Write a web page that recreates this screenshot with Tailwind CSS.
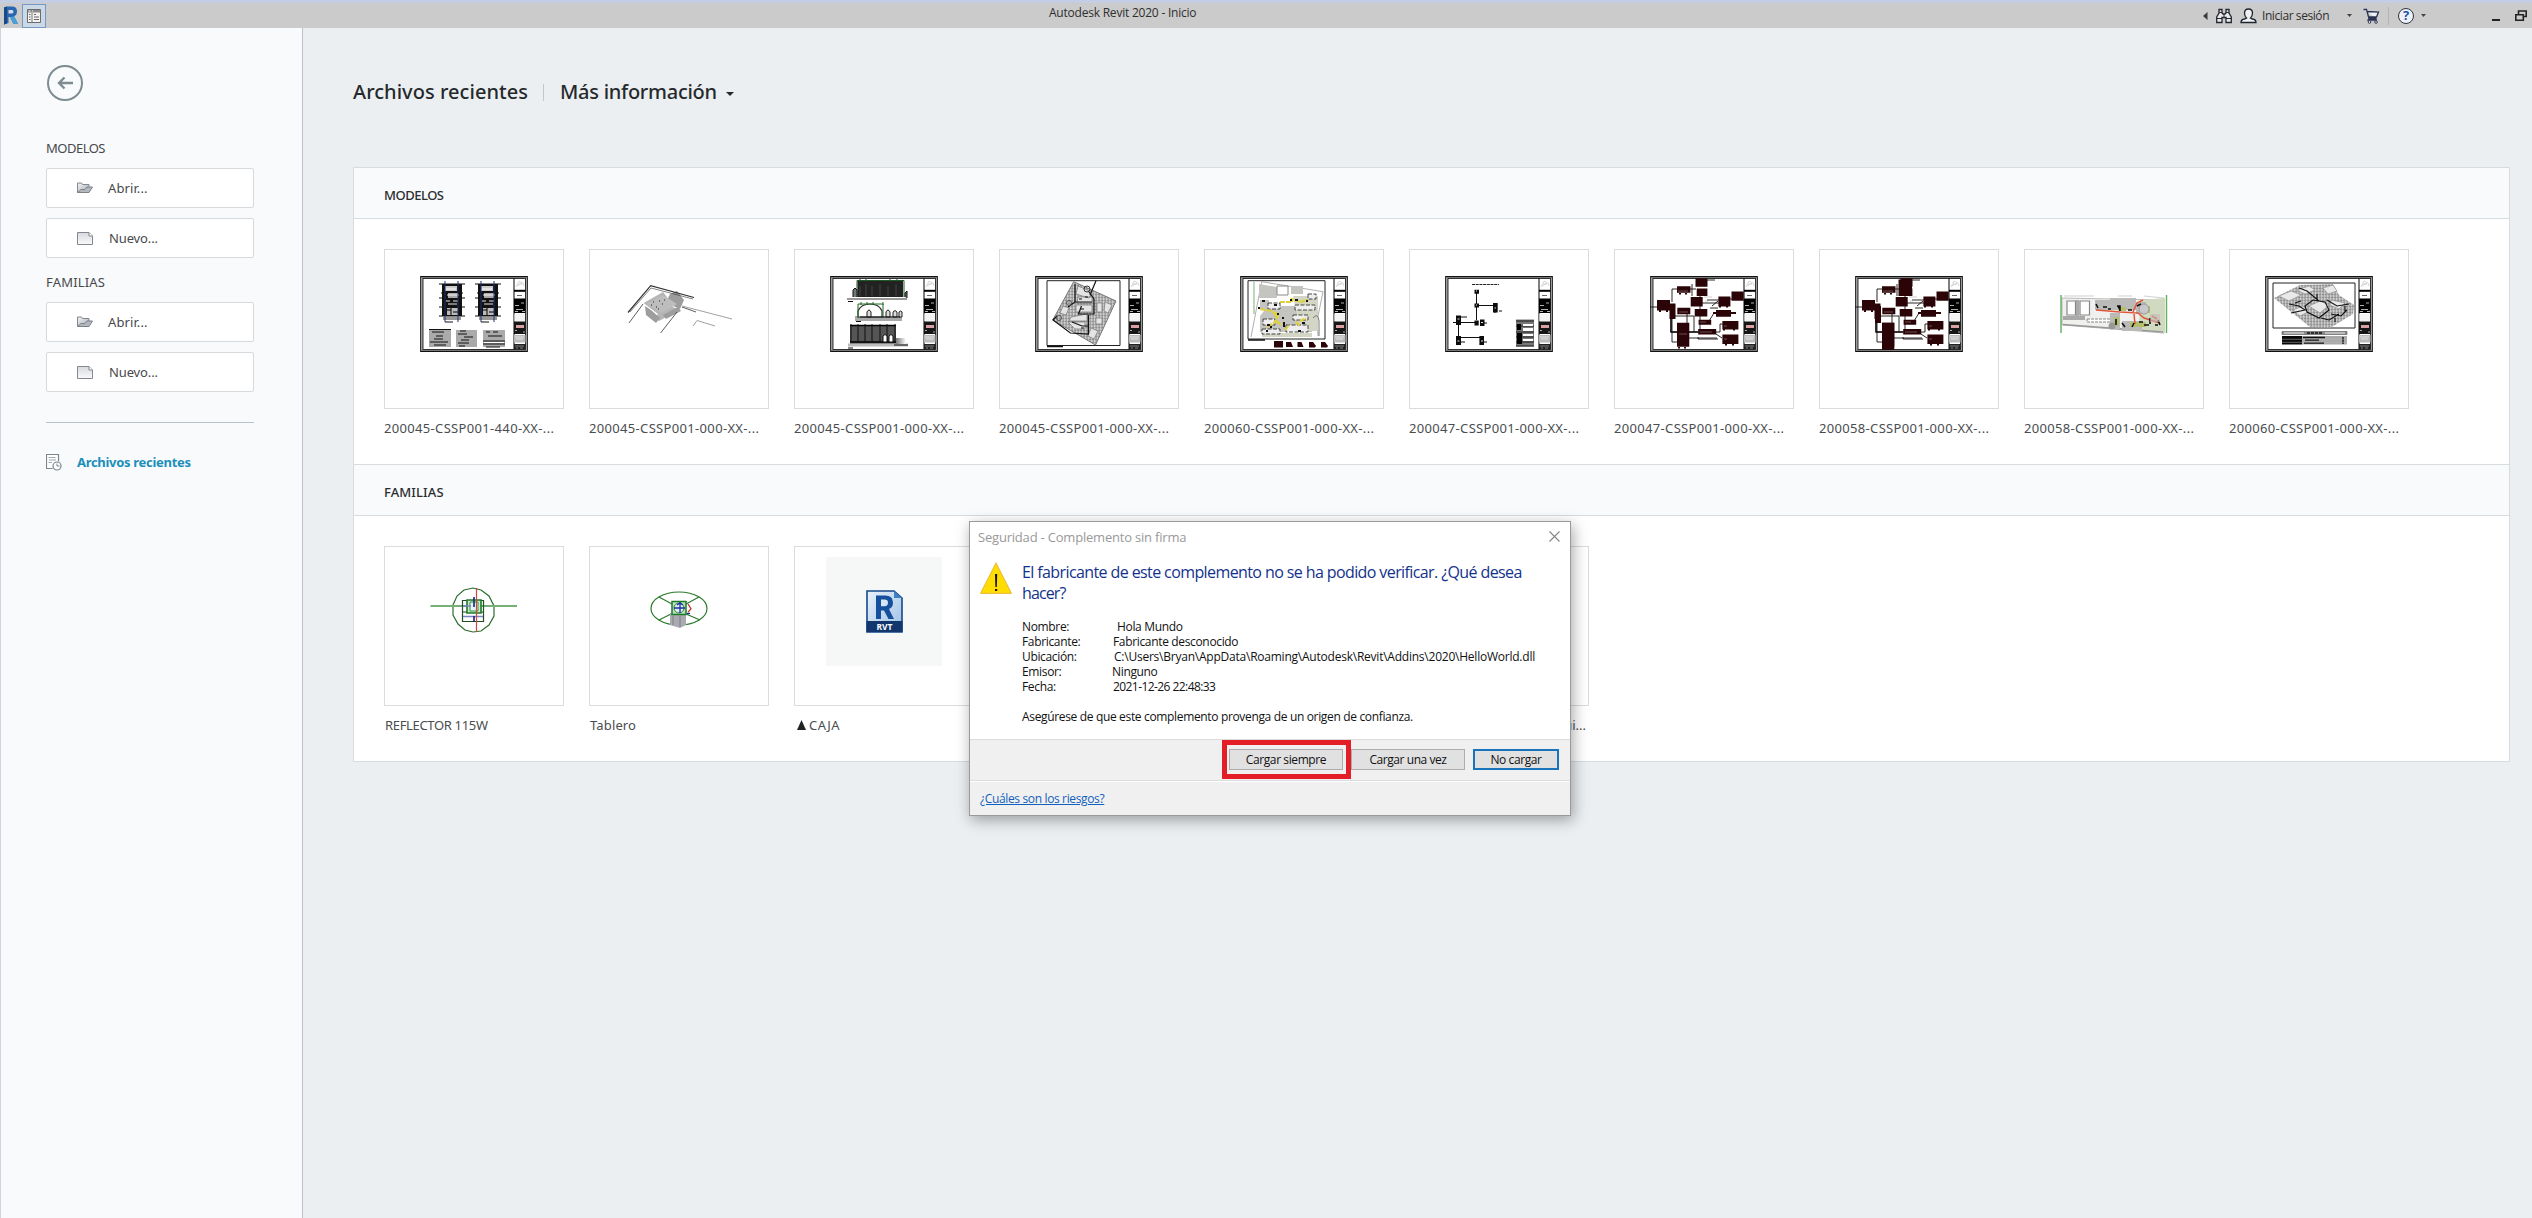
<!DOCTYPE html>
<html lang="es">
<head>
<meta charset="utf-8">
<title>Autodesk Revit 2020 - Inicio</title>
<script src="https://cdn.jsdelivr.net/npm/@tailwindcss/browser@4"></script>
</head>
<body class="relative flex h-[1218px] w-[2532px] flex-col overflow-hidden bg-[#ebeff2] font-['Noto_Sans',sans-serif] text-[13px] leading-5 text-[#4a4d50]">

<!-- Shared drawings -->
<svg width="0" height="0" class="absolute">
  <defs>
    <linearGradient id="gFold" x1="0" y1="0" x2="1" y2="1"><stop offset="0" stop-color="#f4f5f7"/><stop offset="1" stop-color="#a4a9b1"/></linearGradient>
    <linearGradient id="gPage" x1="0" y1="0" x2="0" y2="1"><stop offset="0" stop-color="#d6d9de"/><stop offset="1" stop-color="#fafafa"/></linearGradient>
    <linearGradient id="gFade" x1="0" y1="0" x2="1" y2="0"><stop offset="0" stop-color="#777"/><stop offset="1" stop-color="#fff"/></linearGradient>
    <linearGradient id="gRvt" x1="0" y1="0" x2="1" y2="1"><stop offset="0" stop-color="#e9f2fb"/><stop offset="1" stop-color="#9dbfe4"/></linearGradient>
    <pattern id="hatch" width="3" height="3" patternUnits="userSpaceOnUse"><rect width="3" height="3" fill="#b4b4b4"/><path d="M0 .5h2M1 2h1" stroke="#8a8a8a" stroke-width=".8"/><path d="M2.5 1.5v1" stroke="#e6e6e6"/></pattern>
    <symbol id="open" viewBox="0 0 16 12"><path d="M.5 10.500v-9.500h4l1 1.500h6.500v2.500" fill="url(#gFold)" stroke="#83888f"/><path d="M.5 10.500L4 7.500h4l2-2.500h5.500l-3.500 5.500z" fill="#b3b8bf" stroke="#7d8289"/></symbol>
    <symbol id="new" viewBox="0 0 16 13"><path d="M.5 .5H12l3.500 3.500v8.500H.5z" fill="url(#gPage)" stroke="#83888f"/><path d="M12 .5v3.500h3.500" fill="#fff" stroke="#83888f"/></symbol>
    <symbol id="sheet" viewBox="0 0 108 76">
      <rect width="108" height="76" fill="#9b9b9b"/><path d="M0 .6h108M0 75.400h108" stroke="#111" stroke-width="1.200"/><path d="M.5 0v76M107.500 0v76" stroke="#333"/>
      <rect x="3" y="2.500" width="102.500" height="71" fill="#fff" stroke="#222" stroke-width=".9"/>
      <path d="M94 2.500v71" stroke="#000" stroke-width="1"/>
      <path d="M96 11l3-6 4 2 1 3M98 8h4M97 10l5-3" stroke="#ccc" stroke-width=".8" fill="none"/>
      <path d="M94 14.800h11.500" stroke="#000" stroke-width="2"/><path d="M97 19.500h5" stroke="#444" stroke-width=".8"/>
      <rect x="94" y="22.500" width="11.500" height="14.500" fill="#000"/><path d="M95 29.500h4M101 27h3M96 33.500h7M95 35.500h3M102 35.500h3" stroke="#ddd" stroke-width=".8"/><rect x="94.500" y="38" width="10.500" height="7" fill="#f3f3f3"/>
      <rect x="94" y="45.500" width="11.500" height="12.500" fill="#161616"/><rect x="96" y="49" width="8" height="3" fill="#dba0a4"/><path d="M95 54.500h2M103 56h2" stroke="#aaa"/>
      <rect x="94" y="59" width="11.500" height="7.500" fill="#bbb"/><path d="M95 61h9M96 63h7" stroke="#eee" stroke-width=".8"/>
      <rect x="94" y="68" width="11.500" height="5.500" fill="#222"/><path d="M95 70h9M96 72h2M100 72h3" stroke="#999" stroke-width=".8"/>
    </symbol>
    <symbol id="plan" viewBox="0 0 26 42">
      <path d="M0 3h26M2 12h22M0 17h26M0 26h26M0 35h26" stroke="#111" stroke-width="1.200"/>
      <rect x="3" y="3" width="20" height="32" fill="#111"/><rect x="6" y="5" width="12" height="5" fill="#ccc"/><rect x="9" y="12" width="10" height="5" fill="#aaa"/><path d="M7 8h10M8 14h12M7 20h4M14 20h5M9 23h9" stroke="#fff" stroke-width=".9"/><rect x="8" y="27" width="11" height="7" fill="#bbb"/><path d="M8 29h4M14 31h5M12 27v7" stroke="#000"/>
      <path d="M4 36h18v3H4z" fill="#999"/><path d="M6 0v41M19 0v41" stroke="#20306e" stroke-width="1"/><path d="M6 41h8" stroke="#111"/>
    </symbol>
    <symbol id="net" viewBox="0 0 108 76">
      <g fill="none" stroke="#161010" stroke-width=".9"><path d="M0 31h8M27 13h-5v13M40 13h6M42 8v12M56 4h9M22 28v38h7M21 28v28h28M24 40h20v16M37 38v24h30M51 27h18M57 24h12M64 37l-5 8M66 56h4v-8h4M66 58l6 4M62 30l6-5M74 23h9M50 18v40M48 61v2h20M60 32h8" stroke="#161010"/><path d="M21 30v26h27" stroke-width="1.500"/></g>
      <g fill="#2b0407"><path d="M7 24h13v10.500H7zM27 10.300h13.500v6.500H27zM45.500 2.300h12v8.500h-12zM46.700 12.500h10.700v7.400H46.700zM40.700 21h12v9.500h-12zM44.700 33h12.600v7.500H44.700zM27.300 31.800h13v6.500h-13zM19.500 27.400h6V43h-6zM68.400 20.400h12v10h-12zM81.500 15.400h12.200v9.300H81.500zM66 34h15v6.700H66zM63 36h23v2H63zM48.600 43.700h12.600v5H48.600zM27 46.700h12.300v24H27zM48.200 53h18v5.400h-18zM72.400 45h16v8.400h-16zM72.400 58.500h16V68h-16z"/><path d="M10 34v2M17 34v2M30 17v1.500M36 17v1.500M29 71v1.500M35 71v1.500M74 53v1.500M84 53v1.500M76 68v1.500M83 68v1.500M70 30v1.500M77 30v1.500" stroke="#2b0407" stroke-width="2"/></g>
      <path d="M28 15h10M29 36h9M50 56h12M50 46h6M29 58h8M54 21h8M55 25h3M74 50h3M74 63h3" stroke="#a99" stroke-width=".5"/>
    </symbol>
  </defs>
</svg>

<!-- Title bar -->
<header class="flex h-7 shrink-0 items-center justify-between border-t-[3px] border-[#c3cde3] bg-[#cbcbcb] font-['Open_Sans',sans-serif] text-[12px] text-[#2e2e2e]">
  <div class="flex w-[1049px] items-center pl-[3px]">
    <svg width="16" height="19" viewBox="0 0 16 19"><path d="M1 1.500L4 .5H9q5 0 5 5 0 3.500-3 4.800L15 18h-4.500L7 11H5.500v6L1 18.500z" fill="#2a66b0"/><path d="M5.500 4H9q1.500 0 1.500 1.700T9 7.500H5.500z" fill="#d4dbe4"/><path d="M1 1.500l3-1v17l-3 1z" fill="#184a86"/><path d="M7 11l3.500 7H15l-3.500-7.500z" fill="#4aa0d0"/></svg>
    <div class="ml-[3px] flex h-6 w-6 items-center justify-center border border-[#7798c6] bg-[#cbd8e6]">
      <svg width="14" height="14" viewBox="0 0 14 14"><path d="M.5 .5h13v13H.5z" fill="#f2f2ee" stroke="#6b6b6b"/><path d="M1 1h12v2.500H1z" fill="#8b8b8b"/><path d="M1.500 2h2M5 2h1" stroke="#eee"/><path d="M5 3.500V13" stroke="#777"/><path d="M2 5.500h1.500M2 8h1.500M2 10.500h1.500M7 5.500h2M7 8h5M7 10.500h5" stroke="#666"/></svg>
    </div>
  </div>
  <div class="-mt-1.5 flex-1 text-[12px] tracking-[-0.22px]">Autodesk Revit 2020 - Inicio</div>
  <div class="flex items-center pr-[5px]">
    <svg width="5" height="8" viewBox="0 0 5 8"><path d="M4.500 0v8L0 4z" fill="#3a3a3a"/></svg>
    <svg class="ml-2" width="16" height="16" viewBox="0 0 16 16"><path d="M.7 14.500V9L3 5V1.500h3V5l1 1h2l1-1V1.500h3V5l2.300 4v5.500H10V9.500H6v5z" fill="#e9e9ee" stroke="#23262e" stroke-width="1.300"/><path d="M3 4.500h3M10 4.500h3M1 10.500h5M10 10.500h5M8 6v3" stroke="#23262e"/></svg>
    <svg class="ml-2" width="17" height="16" viewBox="0 0 17 16"><path d="M1 14.500q0-3 3.500-3.500l2-1Q4.500 8 4.500 5q0-4 4-4t4 4q0 3-2 5l2 1q3.500.5 3.500 3.500z" fill="#eef0f5" stroke="#20242c" stroke-width="1.300"/></svg>
    <span class="ml-[5px] w-[68px] whitespace-nowrap tracking-[-0.42px]">Iniciar sesión</span>
    <svg class="ml-[17px]" width="5" height="3" viewBox="0 0 5 3"><path d="M0 0h5L2.500 3z" fill="#444"/></svg>
    <svg class="ml-[11px]" width="17" height="16" viewBox="0 0 17 16"><path d="M.5 1.500h3L6 10.500h7.500M4 3.500l11.500.5-2 5H5.500M6 10.500l-1 1.500h9" fill="#f0f1f5" stroke="#2b3354" stroke-width="1.300"/><circle cx="6.500" cy="14" r="1.300" fill="#fff" stroke="#2b3354"/><circle cx="13" cy="14" r="1.300" fill="#fff" stroke="#2b3354"/></svg>
    <div class="ml-2 h-[18px] w-px bg-[#b3b3b3]"></div>
    <div class="ml-[9px] flex h-4 w-4 items-center justify-center rounded-full border border-[#30343c] bg-[#eef2f8] text-[13px] font-bold leading-none text-[#1f55a8]">?</div>
    <svg class="ml-[7px]" width="5" height="3" viewBox="0 0 5 3"><path d="M0 0h5L2.500 3z" fill="#444"/></svg>
    <div class="ml-[66px] mt-2 h-0.5 w-2 bg-[#222]"></div>
    <svg class="ml-[15px]" width="12" height="11" viewBox="0 0 12 11"><path d="M3.500 4V1h7.700v5.500H8.500" fill="none" stroke="#222" stroke-width="1.600"/><path d="M.8 4.700h7.500v5.500H.8z" fill="none" stroke="#222" stroke-width="1.600"/></svg>
  </div>
</header>

<div class="flex min-h-0 flex-1">
  <!-- Sidebar -->
  <aside class="w-[303px] shrink-0 border-x border-l-[#cdd4e2] border-r-[#b9c1c9] bg-[#f8fafc] pl-[45px] pr-12 text-[#47494c]">
    <svg class="mt-[37px]" width="38" height="36" viewBox="0 0 38 36"><circle cx="19" cy="18" r="17" fill="none" stroke="#7e8c92" stroke-width="2"/><path d="M27 18H13M18.500 12.500L13 18l5.500 5.500" fill="none" stroke="#7e8c92" stroke-width="2.400"/></svg>
    <h2 class="mt-[37px] tracking-[-0.5px]">MODELOS</h2>
    <div class="mt-2.5 flex flex-col gap-2.5">
      <button class="flex h-10 items-center rounded-[2px] border border-[#d6dadd] bg-white pl-[30px]"><svg width="16" height="12"><use href="#open"/></svg><span class="ml-[15px] tracking-[0.1px]">Abrir...</span></button>
      <button class="flex h-10 items-center rounded-[2px] border border-[#d6dadd] bg-white pl-[30px]"><svg width="16" height="13"><use href="#new"/></svg><span class="ml-4 tracking-[-0.13px]">Nuevo...</span></button>
    </div>
    <h2 class="mt-3.5 tracking-[0.19px]">FAMILIAS</h2>
    <div class="mt-2.5 flex flex-col gap-2.5">
      <button class="flex h-10 items-center rounded-[2px] border border-[#d6dadd] bg-white pl-[30px]"><svg width="16" height="12"><use href="#open"/></svg><span class="ml-[15px] tracking-[0.1px]">Abrir...</span></button>
      <button class="flex h-10 items-center rounded-[2px] border border-[#d6dadd] bg-white pl-[30px]"><svg width="16" height="13"><use href="#new"/></svg><span class="ml-4 tracking-[-0.13px]">Nuevo...</span></button>
    </div>
    <hr class="mt-[30px] border-[#b9c2ca]">
    <div class="mt-[29px] flex items-center">
      <svg width="16" height="17" viewBox="0 0 16 17"><path d="M6.500 14.500h-6V.5h12v7" fill="#fff" stroke="#7d868c" stroke-width="1.200"/><path d="M2.500 3.500h7M3 6h7M2.500 8.500H6" stroke="#a0a6aa"/><circle cx="11" cy="12" r="4" fill="#fff" stroke="#7d868c" stroke-width="1.200"/><path d="M11 9.500V12h2.500" fill="none" stroke="#7d868c"/></svg>
      <span class="ml-[15px] font-bold tracking-[-0.3px] text-[#1b8fba]">Archivos recientes</span>
    </div>
  </aside>

  <!-- Recent files -->
  <main class="min-w-0 flex-1 pl-[50px] pr-[22px] pt-[50px]">
    <div class="flex h-7 items-center text-[20px] font-medium leading-7 text-[#26292b]">
      <h1 class="w-[190px] whitespace-nowrap tracking-[0.04px]">Archivos recientes</h1>
      <div class="h-[17px] w-px bg-[#c3c8cc]"></div>
      <span class="ml-4 w-[158px] whitespace-nowrap tracking-[-0.27px]">Más información</span>
      <svg class="ml-2 mt-1" width="8" height="4" viewBox="0 0 8 4"><path d="M0 0h8L4 4z" fill="#26292b"/></svg>
    </div>

    <section class="mt-[61px] h-[595px] border border-[#d8dcdf] bg-white">
      <h2 class="h-[51px] border-b border-[#d8dcdf] bg-[#f8fafc] pl-[30px] pt-[17px] font-medium tracking-[-0.48px] text-[#2b2d2f]">MODELOS</h2>
      <div class="flex h-[245px] gap-[25px] pl-[30px] pt-[30px] tracking-[0.33px]">
        <div class="w-[180px]">
          <div class="h-40 border border-[#d9dddf] pl-[35px] pt-[26px]"><svg width="108" height="76" viewBox="0 0 108 76"><use href="#sheet"/><use href="#plan" x="19" y="5" width="26" height="42"/><use href="#plan" x="55" y="5" width="26" height="42"/><path d="M9 53h22v18H9zM36 54h21v17H36zM63 54h22v17H63z" fill="#aaa"/><path d="M9 53.500h22M12 56h12M16 60h7M14 63h9M10 66h18M14 69h12M40 55h6M38 58h9M44 61h9M41 64h8M38 67h11M39 70h6M66 56h4M73 56h5M68 60h14M63 65h22M63 68h22M66 71h14" stroke="#111" stroke-width="1"/><path d="M64 66.500h20" stroke="#fff"/></svg></div>
          <div class="mt-[9px] whitespace-nowrap">200045-CSSP001-440-XX-...</div>
        </div>
        <div class="w-[180px]">
          <div class="h-40 border border-[#d9dddf] pl-[35px] pt-[26px]"><svg width="108" height="76" viewBox="0 0 108 76"><path d="M18.600 27L38 16l4 5-6 4 18 9-20 11-4-3 3-4z" fill="#b5b5b5"/><path d="M45 18l7-3 7 9-4 9-9-4-3-7zM38 39l15-8 3 4-15 8zM20 30l6 4 9 8-4 5-10-8z" fill="#9d9d9d"/><path d="M22 28l16-9 14 9-15 9z" fill="#bdbdbd"/><path d="M26 29h1M31 31h1M34 25h1M28 26h1M37 28h1M39 24h1M33 33h1" stroke="#222" stroke-width="1.200"/><g fill="none" stroke="#333"><path d="M3 36.500L25.700 9.700 69 21.500" stroke-width="1.200"/><path d="M5 36L26 12l42 11" stroke-width=".6"/><path d="M4 47l14-19M35.600 57L52 36M71 36l-14-5" stroke-width=".8"/><path d="M57 30l50 13M68 50l4-5.500L90 50" stroke="#888" stroke-width=".8"/></g></svg></div>
          <div class="mt-[9px] whitespace-nowrap">200045-CSSP001-000-XX-...</div>
        </div>
        <div class="w-[180px]">
          <div class="h-40 border border-[#d9dddf] pl-[35px] pt-[26px]"><svg width="108" height="76" viewBox="0 0 108 76"><use href="#sheet"/><path d="M27.500 4.500H73V21H27.500z" fill="#222"/><path d="M30 10v10M36 8v12M42 10v10M50 8v12M58 10v10M66 8v12" stroke="#444"/><path d="M27 21V4.500h47V21M30 2.500v3M36 2.500v3M60 2.500v3M67 2.500v3" fill="none" stroke="#1d5a24" stroke-width="1"/><path d="M17 23h60" stroke="#999" stroke-width="2"/><path d="M23 21v-7l2-2 2 2v7M75 21v-4l2-2v7" fill="#777" stroke="#111"/><path d="M18 25.500h5" stroke="#111"/>
          <path d="M25 42.500h47" stroke="#aaa" stroke-width="5"/><path d="M28 41v-6q3-7 12-7t12 7v6z" fill="#fff" stroke="#333" stroke-width="1.200"/><path d="M28 42V28h25v14M31 26v3M37 26v3M43 26v3M53 26v3" fill="none" stroke="#1d6a24"/><path d="M37 41v-5q2-4 4 0v5zM56 41v-5q2-4 4 0v5zM63 41v-5q2-3 4 0v5zM69 41v-5q2-2 3 0v5z" fill="#ddd" stroke="#222"/><path d="M26 45.500h5M30 41h40" stroke="#111"/>
          <path d="M20 49.500h46V68H20z" fill="#555"/><path d="M20 49.500h46M20 66h46" stroke="#000" stroke-width="1.500"/><path d="M21 48v18M28 48v18M35 48v18M42 48v18M50 48v18M57 48v18M65 48v18" stroke="#111"/><path d="M18 69h60" stroke="#bbb" stroke-width="3"/><path d="M66 62h10v6H66z" fill="url(#gFade)"/><path d="M53 66v-6q2-3 4 0v6zM59 66v-6q2-3 4 0v6z" fill="#fff" stroke="#111"/><path d="M18 72h5M64 69h14" stroke="#111"/></svg></div>
          <div class="mt-[9px] whitespace-nowrap">200045-CSSP001-000-XX-...</div>
        </div>
        <div class="w-[180px]">
          <div class="h-40 border border-[#d9dddf] pl-[35px] pt-[26px]"><svg width="108" height="76" viewBox="0 0 108 76"><use href="#sheet"/><path d="M12 4.700h73V69.500H12z" fill="#fff" stroke="#222"/><path d="M38.700 5.700L81 25 60.500 69 17.800 44z" fill="url(#hatch)" stroke="#777"/><path d="M43 10l14 6-3 6-13-4zM43 21h14v6H42zM41 29h16v7H41zM36 41l16-3v7H34zM62 27h5v9h-5zM70 26l7 3-4 8-4-2zM33 46h17v7H40zM61 42h6v6h-6zM56 52l7 3-4 8-6-3zM28 30l6 2-3 7-6-2z" fill="#e4e4e4" stroke="#777" stroke-width=".7"/><path d="M61 4.700L55 19M54 16l5 7v15H43.500l3-8M53.400 39v19l-18-1L18 44l4-4M40 8v18l-7 5M40 26h17M37 46l10 4h7M50 21h3M46 33h3M46 52h3M44 23h3" fill="none" stroke="#111" stroke-width="1.200"/><circle cx="52" cy="13" r="3" fill="none" stroke="#333"/><circle cx="34" cy="27" r="2.500" fill="none" stroke="#555"/><circle cx="24" cy="42" r="2.500" fill="none" stroke="#555"/><path d="M12 70.500h16" stroke="#111" stroke-width="1.500"/></svg></div>
          <div class="mt-[9px] whitespace-nowrap">200045-CSSP001-000-XX-...</div>
        </div>
        <div class="w-[180px]">
          <div class="h-40 border border-[#d9dddf] pl-[35px] pt-[26px]"><svg width="108" height="76" viewBox="0 0 108 76"><use href="#sheet"/><path d="M8 4.700h77V63H8z" fill="#fff" stroke="#222"/><path d="M14 6v32" stroke="#79b37c"/><path d="M11 61L21.700 5.700 83 15.700 77 45l1 15" fill="none" stroke="#999" stroke-width=".8"/><path d="M19 8l18 3v11H19zM20 24h9v10h-9zM51 10h12v8H51zM28 30h44v26H20V40z" fill="#c4c4c0"/><path d="M53 20h25v35H60zM22 57h50v4H22z" fill="#d3d6c4"/><path d="M37 10h11v9H37z" fill="#fff" stroke="#888"/><path d="M55 29h20v5H55zM53 39h15v5H53zM22 53h18v5H22zM46 49h22v7H46zM23 43h12v6H23zM28 27h12v6H28zM68 18h8v5h-8z" fill="#eee" stroke="#333" stroke-width=".9" stroke-dasharray="4 1.500"/><path d="M20 33l12 2 6 6-4 6-8 4M40 26h12v-3l8 3 8-2M36 45l6 4M60 45l6-3M56 46l4 4M45 54l4-5M36 36v5" fill="none" stroke="#ded23c" stroke-width="2.200" stroke-dasharray="5 1"/><path d="M18 32h2M22 25h3M37 38h2M42 42h2M44 46v5M30 51h2M55 24h3M62 47h3M58 55h3M26 55h2M66 25h2M34 29h3M50 24h2M27 49h3" stroke="#111" stroke-width="2"/><path d="M73 42q5-6 6 3v15" fill="none" stroke="#777"/><path d="M8 64h17" stroke="#111" stroke-width="1.500"/><path d="M34 65h9v6.500h-9zM46 66h5l2 5h-7zM57.500 66h4l2 5h-6zM69 66h4l3 4-1 1.500h-6zM81 66h4l3 4-1 1.500h-6z" fill="#2b0407"/></svg></div>
          <div class="mt-[9px] whitespace-nowrap">200060-CSSP001-000-XX-...</div>
        </div>
        <div class="w-[180px]">
          <div class="h-40 border border-[#d9dddf] pl-[35px] pt-[26px]"><svg width="108" height="76" viewBox="0 0 108 76"><use href="#sheet"/><path d="M27 8.500h27" stroke="#222" stroke-width="1" stroke-dasharray="3 .7"/><path d="M31.500 17v27M34 29.500h15M13.500 46v20M14 61.500h24M8 46.500h22M15 41h7M50 36v1M54 35h3M16 66h4M38 66h4M38 47h4" fill="none" stroke="#111"/><path d="M29.500 13.700H34v4h-4.500zM29.500 27.500H34v4h-4.500zM48 27h4.700v9.500H48zM11 39.500h5V49h-5zM29.500 44.500h4.200v5h-4.200zM35 43.500h4.500V50H35zM11 60h5v9h-5zM34.400 60H39v9h-4.600z" fill="#0c0c0c"/><path d="M31 15h1M31 29h1M49.500 32h1.500M12.500 43h2M12.500 65h2M36 65h2M36 46.500h2" stroke="#ddd"/><path d="M71 43.500h18v27H71z" fill="#777"/><path d="M71 45h18M71 50h18M71 56h18M71 61h18M71 66h18M71 70h18" stroke="#222"/><path d="M72 48h4v6h-4zM72 57h5v11h-5z" fill="#000"/><path d="M78 48h10v2H78zM78 52h10v3H78zM78 58h10v2H78zM78 63h10v2H78z" fill="#fff"/></svg></div>
          <div class="mt-[9px] whitespace-nowrap">200047-CSSP001-000-XX-...</div>
        </div>
        <div class="w-[180px]">
          <div class="h-40 border border-[#d9dddf] pl-[35px] pt-[26px]"><svg width="108" height="76" viewBox="0 0 108 76"><use href="#sheet"/><use href="#net"/></svg></div>
          <div class="mt-[9px] whitespace-nowrap">200047-CSSP001-000-XX-...</div>
        </div>
        <div class="w-[180px]">
          <div class="h-40 border border-[#d9dddf] pl-[35px] pt-[26px]"><svg width="108" height="76" viewBox="0 0 108 76"><use href="#sheet"/><use href="#net"/><path d="M43.500 3.500H57V20H43.500zM27 46.700h12.300V74H27zM20 30h6v17h-6z" fill="#2b0407"/></svg></div>
          <div class="mt-[9px] whitespace-nowrap">200058-CSSP001-000-XX-...</div>
        </div>
        <div class="w-[180px]">
          <div class="h-40 border border-[#d9dddf] pl-[35px] pt-[26px]"><svg width="108" height="76" viewBox="0 0 108 76"><path d="M2 22l102 2v33L2 49z" fill="#f0f0ef" stroke="#aaa" stroke-width=".8"/><path d="M1 19v38M106.500 19v38" stroke="#5fb05f" stroke-width="1.400"/><path d="M80 24l25-2v34l-26-2z" fill="#cfdac0"/><path d="M7 25h8.500v14H7zM20 25h9.500v14H20z" fill="#fff" stroke="#888" stroke-width="1.200"/><path d="M3 40h22v4H3zM16 24h3v18h-3z" fill="#aaa"/><path d="M27 43h24v3H27z" fill="#fff" stroke="#888" stroke-dasharray="3 1"/><path d="M3 48.500l100 7.500" stroke="#999" stroke-width="1.600"/><path d="M4 20h30M58 20h14M84 20l20 2" stroke="#bbb" stroke-width=".7"/><path d="M35 24h15v10H35zM50 22h26v12H50zM50 37h10v16H50zM62 45h20v10H62zM76 26h10v12H76z" fill="#babab8"/><path d="M54 41h5v9h-5zM70 46h16v5H70zM58 31h8v4h-8zM84 30h6v7h-6z" fill="#b3bf6a"/><path d="M36 34l24 2 18 1 6 5 16 5M73 36l4-9 6-3M74 38l1 10M92 40l5 3" fill="none" stroke="#e0583c" stroke-width="1.500"/><path d="M36 28l2 4M43 31h4M57 30h3v5M68 34h4M56 43v6M62 47l3 4M74 47l-2 4M79 46h4M90 42v6M77 30l4-2M98 44l2 5M48 33h3M84 49h5M95 49h3" stroke="#111" stroke-width="1.600"/><circle cx="84" cy="33" r="5" fill="#c8c8cc" stroke="#888" stroke-width=".7"/><circle cx="52" cy="50" r="3.500" fill="#999"/><path d="M90 38h10v8H90z" fill="#c4b8b4" opacity=".6"/></svg></div>
          <div class="mt-[9px] whitespace-nowrap">200058-CSSP001-000-XX-...</div>
        </div>
        <div class="w-[180px]">
          <div class="h-40 border border-[#d9dddf] pl-[35px] pt-[26px]"><svg width="108" height="76" viewBox="0 0 108 76"><use href="#sheet"/><path d="M8 7h82v45H8z" fill="#fff" stroke="#222"/><path d="M9 22L35 9l33-1 6 11 15 10-1 9-23 14-20-1z" fill="url(#hatch)"/><path d="M14 20l12-5 10 4-12 6zM32 14l12-4 6 4-10 4zM58 12l10-3 4 6-9 3zM44 30l11-5 9 4-9 8zM66 24l14 3-6 6-9-4zM28 34l10-4 5 6-8 4z" fill="#e9e9e9" stroke="#888" stroke-width=".6"/><path d="M24 28l10 2 6 4-14 3M34 12l8 3 12 10M40 30l8-6 12 2 4 8-10 8-12-6zM62 24l10 6 12-2M66 38l10 2 6-6M56 42l8 2M64 44l10-6M30 27l6-2M52 18v5M70 42v4M80 30v6" fill="none" stroke="#111" stroke-width="1.100"/><path d="M17 55.500h65v3H17z" fill="#888" stroke="#555" stroke-width=".6"/><path d="M42 57h15" stroke="#111" stroke-width="1.400" stroke-dasharray="3 1"/><path d="M19 57h20M60 57h20" stroke="#eee"/><path d="M17 60h20v8.500H17z" fill="#080808"/><path d="M37 60h45v8.500H37z" fill="#aaa"/><path d="M38 61.500h22M40 64h14M39 67h20M78 61v7" stroke="#111" stroke-width="1.400"/><path d="M17 63.300h65M17 66.300h65" stroke="#bbb" stroke-width=".5"/></svg></div>
          <div class="mt-[9px] whitespace-nowrap">200060-CSSP001-000-XX-...</div>
        </div>
      </div>

      <h2 class="h-[52px] border-y border-[#d8dcdf] bg-[#f8fafc] pl-[30px] pt-[17px] font-medium tracking-[0.1px] text-[#2b2d2f]">FAMILIAS</h2>
      <div class="flex gap-[25px] pl-[30px] pt-[30px]">
        <div class="w-[180px]">
          <div class="h-40 border border-[#d9dddf]"><svg width="178" height="158" viewBox="1 1 178 158"><path d="M89 42l8 2 8 6 5 10v10l-5 9-8 6-8 1-8-2-7-6-5-9v-10l4-9 7-6z" fill="none" stroke="#2c6e2c" stroke-width="1.200"/><path d="M46.500 60H133" stroke="#77b077" stroke-width="2"/><path d="M78.500 54.500h21v21h-21zM78.500 66h21" fill="none" stroke="#234d23" stroke-width="1.200"/><path d="M83 54h14v13H83z" fill="#cfe8cf" stroke="#1c7a2a" stroke-width="1.600"/><path d="M86 56h8v9h-8z" fill="#e6f2ff" stroke="#2e9a3a"/><path d="M79 60h8M79 70.500h20" stroke="#7b82c4" stroke-width="1.300"/><path d="M90 51v10M90 70v6" stroke="#1a237e" stroke-width="1.600"/><path d="M92.500 42v44M92 85.500h1" stroke="#cc4a3a" stroke-width="1.200"/></svg></div>
          <div class="mt-[9px] whitespace-nowrap pl-px tracking-[-0.33px]">REFLECTOR 115W</div>
        </div>
        <div class="w-[180px]">
          <div class="h-40 border border-[#d9dddf]"><svg width="178" height="158" viewBox="1 1 178 158"><ellipse cx="90" cy="62.500" rx="28" ry="16.500" fill="none" stroke="#2c7a2c" stroke-width="1.200"/><path d="M70 51l13 7M110 51L97 58M70 74l12-6M111 74l-14-6" stroke="#2c7a2c" stroke-width="1.200"/><path d="M81 67h16v12l-6 3-10-3z" fill="#a9abb0"/><path d="M84 70v9M91 70v11" stroke="#8b8e94" stroke-width="1.500"/><path d="M83 55.500h14v13H83z" fill="#bfe0bf" stroke="#1c7a2a" stroke-width="1.500"/><circle cx="90" cy="62" r="5" fill="#dfeef5" stroke="#2a8a35"/><path d="M91 56v11M85 62h11M88 59l3-2 3 2" fill="none" stroke="#1a2f9e" stroke-width="1.300"/><path d="M99 58l3 5-3 3" fill="none" stroke="#c53030" stroke-width="1.300"/><path d="M98 67.500h3" stroke="#1a2f9e" stroke-width="1.500"/></svg></div>
          <div class="mt-[9px] whitespace-nowrap pl-px tracking-[0.14px]">Tablero</div>
        </div>
        <div class="w-[180px]">
          <div class="h-40 border border-[#d9dddf]"><svg width="178" height="158" viewBox="1 1 178 158"><path d="M32 11h116v109H32z" fill="#f6f8f8"/><path d="M73 45h27l8 7v34H73z" fill="url(#gRvt)" stroke="#16488c" stroke-width="1.600"/><path d="M100 45v7h8z" fill="#3f7fc4"/><path d="M82 73V49.500h9q8 0 8 7 0 5-4 6.500l5 10h-5.500L90 64.500h-3V73z" fill="#164f9c"/><path d="M87 53.500h3.500q3.500 0 3.500 3.300t-3.500 3.500H87z" fill="#d5e5f5"/><path d="M72.500 75h36v11h-36z" fill="#12376f"/><text x="90.500" y="84" text-anchor="middle" font-family="Open Sans, sans-serif" font-weight="700" font-size="9" fill="#fff" textLength="16" lengthAdjust="spacingAndGlyphs">RVT</text></svg></div>
          <div class="mt-[9px] flex items-center whitespace-nowrap pl-[3px]"><svg width="9" height="10" viewBox="0 0 9 10"><path d="M4.500 0L9 10H0z" fill="#222"/></svg><span class="ml-[3px] tracking-[0.5px]">CAJA</span></div>
        </div>
        <div class="w-[180px]"><div class="h-40 border border-[#d9dddf]"></div></div>
        <div class="w-[180px]"><div class="h-40 border border-[#d9dddf]"></div></div>
        <div class="w-[180px]"><div class="h-40 border border-[#d9dddf]"></div><div class="mt-[9px] pr-[3px] text-right">ui...</div></div>
      </div>
    </section>
  </main>
</div>

<!-- Security dialog -->
<div class="absolute left-[969px] top-[521px] flex h-[295px] w-[602px] flex-col border border-[#9a9a9a] bg-white font-['Open_Sans',sans-serif] text-[12px] leading-[15px] text-[#111] shadow-[2px_4px_14px_rgba(0,0,0,0.35)]">
  <div class="flex h-8 items-start justify-between pl-2 pr-2.5 pt-[5px]">
    <span class="text-[13px] leading-5 tracking-[-0.2px] text-[#999]">Seguridad - Complemento sin firma</span>
    <svg class="mt-1" width="11" height="11" viewBox="0 0 11 11"><path d="M.5 .5l10 10M10.500 .5l-10 10" stroke="#858585" stroke-width="1.100"/></svg>
  </div>
  <div class="flex h-[185px] pl-2.5 pt-2">
    <svg width="32" height="32" viewBox="0 0 32 32"><path d="M16 1L31.300 31.300H.7z" fill="#ffdd00" stroke="#eebf3a" stroke-width="1.200" stroke-linejoin="round"/><path d="M15 12h2.200l-.4 13h-1.400zM15 27h2.200v2H15z" fill="#111"/></svg>
    <div class="ml-2.5">
      <p class="w-[540px] text-[16px] leading-[21px] tracking-[-0.6px] text-[#12328c]">El fabricante de este complemento no se ha podido verificar. ¿Qué desea<br><span class="tracking-[-0.9px]">hacer?</span></p>
      <div class="mt-[15px] grid grid-cols-[90px_1fr] whitespace-nowrap tracking-[-0.34px]">
        <span>Nombre:</span><span class="pl-[5px]">Hola Mundo</span>
        <span>Fabricante:</span><span class="pl-px">Fabricante desconocido</span>
        <span>Ubicación:</span><span class="pl-[2px] tracking-[-0.23px]">C:\Users\Bryan\AppData\Roaming\Autodesk\Revit\Addins\2020\HelloWorld.dll</span>
        <span>Emisor:</span><span>Ninguno</span>
        <span>Fecha:</span><span class="pl-px tracking-[-0.57px]">2021-12-26 22:48:33</span>
      </div>
      <p class="mt-[15px] tracking-[-0.34px]">Asegúrese de que este complemento provenga de un origen de confianza.</p>
    </div>
  </div>
  <div class="relative flex h-[42px] border-y border-[#dcdcdc] bg-[#f0f0f0] pl-[259px] pt-[9px]">
    <button class="h-[21px] w-[114px] border border-[#adadad] bg-[#e1e1e1] tracking-[-0.4px]">Cargar siempre</button>
    <button class="ml-2 h-[21px] w-[114px] border border-[#adadad] bg-[#e1e1e1] tracking-[-0.44px]">Cargar una vez</button>
    <button class="ml-2 h-[21px] w-[86px] border-2 border-[#1a74bc] bg-[#e1e1e1] tracking-[-0.4px]">No cargar</button>
    <!-- Highlight frame around the first button -->
    <div class="absolute left-[252px] top-0 h-[39px] w-[129px] border-[5px] border-[#e31e26]"></div>
  </div>
  <div class="flex-1 border-t border-white bg-[#f0f0f0] pl-2.5 pt-[9px]"><span class="tracking-[-0.36px] text-[#1060bd] underline">¿Cuáles son los riesgos?</span></div>
</div>
</body>
</html>
